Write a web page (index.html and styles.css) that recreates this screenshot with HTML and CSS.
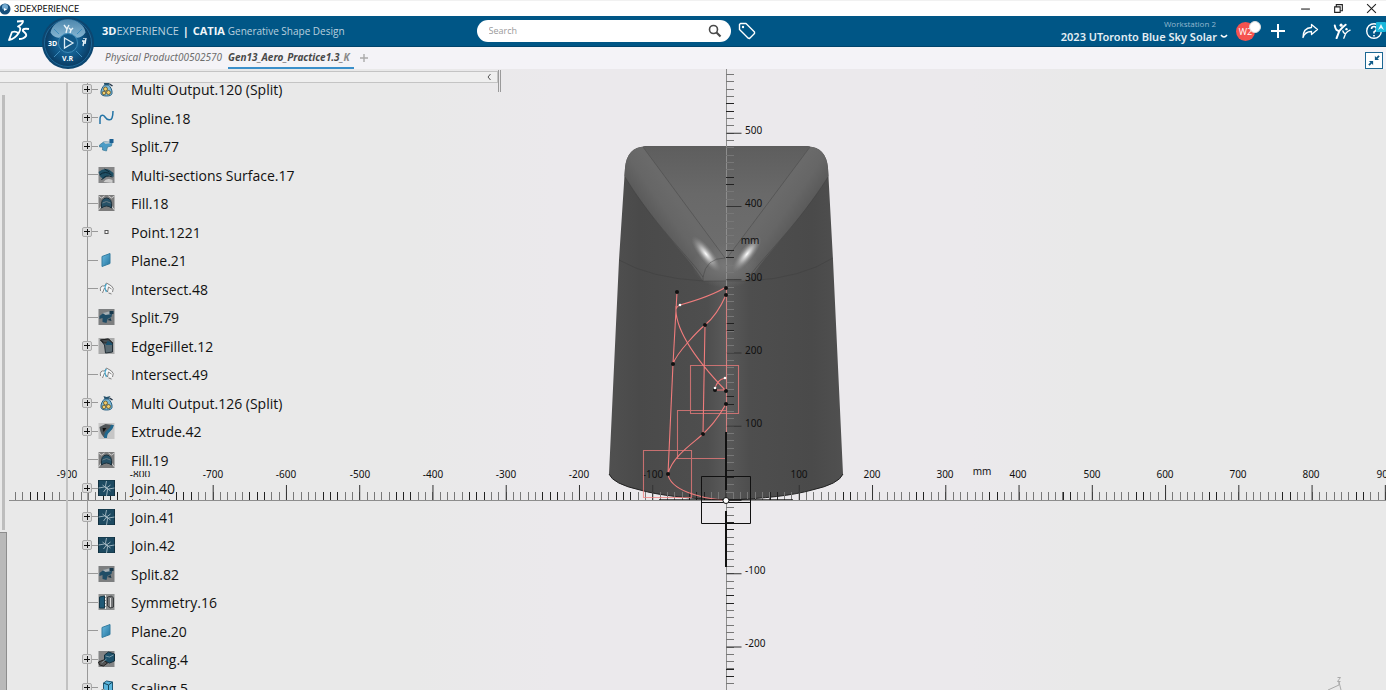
FILE: index.html
```html
<!DOCTYPE html>
<html lang="en">
<head>
<meta charset="utf-8">
<title>3DEXPERIENCE</title>
<link rel="stylesheet" href="styles.css">
</head>
<body>
<svg class="defs" aria-hidden="true">
  <defs>
    <linearGradient id="steel" x1="0" y1="0" x2="1" y2="1"><stop offset="0" stop-color="#6cbbe0"/><stop offset="1" stop-color="#22749f"/></linearGradient>
    <symbol id="i-bag" viewBox="0 0 16 16">
      <path d="M5 1l3 1 4-1-2 3H6z" fill="#27516a"/><path d="M11 3l3 2" stroke="#234" stroke-width="1.5"/>
      <path d="M6 4h4c2 2 4 5 3.500 8.500Q13 15 8 15t-5.500-2.500C2 9 4 6 6 4z" fill="#7db9d6" stroke="#255e80"/>
      <circle cx="7" cy="8" r="2" fill="#f2cd6a" stroke="#54441d" stroke-width=".7"/><circle cx="5.500" cy="12" r="1.800" fill="#f2cd6a" stroke="#54441d" stroke-width=".7"/><circle cx="10" cy="11.500" r="2" fill="#f2cd6a" stroke="#54441d" stroke-width=".7"/>
    </symbol>
    <symbol id="i-spline" viewBox="0 0 16 16"><path d="M1.500 14V9c0-4 3-5 5-2s6 4 7 1 1-4 1-7" fill="none" stroke="#2474a6" stroke-width="1.500"/></symbol>
    <symbol id="i-split" viewBox="0 0 16 16">
      <path d="M1 7l4-3 9-1-1 5-4 1-1 4-4-1V9L1 9z" fill="#4a9cc6" stroke="#31718f" stroke-width=".6"/><path d="M5 4l9-2v3L7 6z" fill="#b4c6cf"/><rect x="11" y="1" width="4" height="4" fill="#1b5f91"/>
    </symbol>
    <symbol id="i-split-dark" viewBox="0 0 16 16">
      <rect width="16" height="16" fill="#7d7f80"/><path d="M1 7l4-3 9-1-1 5-4 2-1 4-4-1V9L1 10z" fill="#204d66"/><path d="M4 4l9-2v3L7 6z" fill="#a9b1b5"/><path d="M11 2h4v3h-4zM9 11l3-2 1 3z" fill="#17384b"/>
    </symbol>
    <symbol id="i-sections" viewBox="0 0 16 16">
      <rect width="16" height="16" fill="#858687"/><path d="M0 5Q6 0 11 3l4 3v4Q10 6 5 12L2 10z" fill="#1f4f64"/><path d="M3 13q4-6 11-3M1 8q6-5 12 0M6 2l5 3" fill="none" stroke="#0c2835"/><path d="M5 15q3-5 9-2v3z" fill="#ccc"/>
    </symbol>
    <symbol id="i-fill" viewBox="0 0 16 16">
      <rect width="16" height="16" fill="#7c7c7c"/><path d="M0 1l3 2 3-2M16 1l-3 2-3-2M0 15l3-4M16 15l-3-4" stroke="#d2d2d2" fill="none"/><path d="M3 13Q2 3 8 3t5 10Q8 9 3 13z" fill="#265167" stroke="#1a303c"/><path d="M4 8q4-3 8 0" stroke="#6b7e87" fill="none"/>
    </symbol>
    <symbol id="i-point" viewBox="0 0 16 16"><rect x="6.500" y="6.500" width="3" height="3" fill="#fff" stroke="#555"/></symbol>
    <symbol id="i-plane" viewBox="0 0 16 16"><path d="M3.500 4.500l8-3v10l-8 3z" fill="url(#steel)" stroke="#357da0"/></symbol>
    <symbol id="i-intersect" viewBox="0 0 16 16"><path d="M2 10q-1-6 4-5l2-3 5 3q3 2 1 6M4 12l2-5 3 4 1-5 3 2M10 12l3 1" fill="#f7f7f7" stroke="#777" stroke-width=".9"/><path d="M8 3q-3 3 0 8" fill="none" stroke="#45a8cf" stroke-width="1.200"/></symbol>
    <symbol id="i-fillet" viewBox="0 0 16 16"><rect width="16" height="16" fill="#a9aaaa"/><path d="M2 2l8-1 4 4v9l-7 1-1-8z" fill="#5b6b73" stroke="#243038"/><path d="M2 2l8-1 4 4H6z" fill="#474d51" stroke="#222"/><path d="M9 3q5 1 5 4H7z" fill="#1c536f"/></symbol>
    <symbol id="i-extrude" viewBox="0 0 16 16"><rect width="16" height="16" fill="#c6c6c6"/><path d="M1 4l6-3 8 1q-1 4-4 6t-4 7q-5-2-6-11z" fill="#4f5558"/><path d="M14 2q-1 4-4 6t-3 7" fill="none" stroke="#22688d" stroke-width="3"/><path d="M4 5h4L5 9z" fill="#111"/></symbol>
    <symbol id="i-join" viewBox="0 0 16 16"><rect width="16" height="16" fill="#1d4a61"/><path d="M0 0h16v16H0z" fill="none" stroke="#12303f"/><path d="M8 1L7 6l2 4-1 6M0 8l6-1 4 2 6-1M4 5l4 3 4-3M5 12l3-4 4 3" fill="none" stroke="#a7bbc5" stroke-width=".9"/></symbol>
    <symbol id="i-symmetry" viewBox="0 0 16 16"><rect width="16" height="16" fill="#909292"/><path d="M1 3l5-1v12H1z" fill="#1f5976" stroke="#153747"/><path d="M7 1v14" stroke="#eee" stroke-dasharray="2 1"/><path d="M9 3l4-1 2 2v9l-3 1-3-2z" fill="#747678" stroke="#383b3d"/><path d="M12 4v9" stroke="#ddd"/></symbol>
    <symbol id="i-scale-dark" viewBox="0 0 16 16"><rect width="16" height="16" fill="#848586"/><path d="M6 4l4-3 6 2v7l-5 2-5-2z" fill="#1e526b" stroke="#14303e"/><path d="M0 11l5-2 4 3-4 3-4-1z" fill="#555" stroke="#222"/><path d="M7 5l4 1 4-2M3 12l5-4" stroke="#9eb4bf" fill="none" stroke-width=".7"/></symbol>
    <symbol id="i-scale" viewBox="0 0 16 16"><path d="M5 3l3-2 6 1v8l-4 2-5-2z" fill="#5bb5dc" stroke="#1e5673"/><path d="M5 3l5 2 4-3M10 5v7" stroke="#164559" fill="none"/><path d="M1 11l4-2 3 3-4 3z" fill="#f2f2e2" stroke="#888"/></symbol>
    <symbol id="i-people" viewBox="0 0 20 18"><circle cx="9" cy="2.500" r="1.700"/><path d="M2 3q1 6 5 6L4 17M14 2Q10 5 7 9" fill="none" stroke="currentColor" stroke-width="2.200" stroke-linecap="round"/><circle cx="15" cy="7" r="1.300"/><path d="M11 9q1 3 3 3l-2 5M19 8q-3 1-5 4" fill="none" stroke="currentColor" stroke-width="1.500" stroke-linecap="round"/></symbol>
  </defs>
</svg>

<div class="titlebar">
  <svg class="titlebar__logo" viewBox="0 0 12 12" aria-hidden="true"><circle cx="5" cy="6" r="5.500" fill="#164f7c"/><circle cx="5" cy="4" r="3" fill="#73a9cf"/><path d="M4 5l3 1.500L4 8z" fill="#fff"/></svg>
  <span class="titlebar__name">3DEXPERIENCE</span>
  <div class="titlebar__controls">
    <button aria-label="Minimize"><svg viewBox="0 0 10 10"><path d="M1 5.500h8"/></svg></button>
    <button aria-label="Restore"><svg viewBox="0 0 10 10"><path d="M1.500 3.500h5v5h-5zM3 3.500v-2h5.500V7H7"/></svg></button>
    <button aria-label="Close"><svg viewBox="0 0 10 10"><path d="M1 1l8 8M9 1L1 9"/></svg></button>
  </div>
</div>

<header class="header">
  <svg class="header__ds" viewBox="0 0 24 22" aria-hidden="true"><path d="M10 1.500l6-.5q0 3-5 5.500 4 1 1 6Q8 19 2 20l3-8q4-1 6 1" fill="none" stroke="#fff" stroke-width="1.800" stroke-linejoin="round"/><path d="M22 9q-7-1-6 2 4 3 3 5-2 3-7 3" fill="none" stroke="#fff" stroke-width="2"/></svg>
  <button class="compass" aria-label="Compass">
    <svg viewBox="0 0 54 54" aria-hidden="true">
      <defs>
        <radialGradient id="cg"><stop offset="0" stop-color="#2a7eb0"/><stop offset=".6" stop-color="#0f5788"/><stop offset="1" stop-color="#0a3c63"/></radialGradient>
        <linearGradient id="ct" x1="0" y1="0" x2="0" y2="1"><stop offset="0" stop-color="#4d87ad"/><stop offset="1" stop-color="#85b5d2"/></linearGradient>
      </defs>
      <circle cx="27" cy="27" r="26" fill="#0c4670"/><circle cx="27" cy="27" r="23.500" fill="url(#cg)" stroke="#1e6797"/>
      <path d="M27 3.500c9 0 17 6 17.500 13q-4 6-9.500 5-8-7-16 0-6 1-9.500-5C11 9 18 3.500 27 3.500z" fill="url(#ct)"/>
      <path d="M13 13l5 5M41 13l-5 5M13 41l6-6M41 41l-6-6" stroke="#3e8dbc"/>
      <circle cx="27" cy="27" r="9.500" fill="#125988" stroke="#3c8bb9"/><path d="M23.500 22l8.500 5-8.500 5z" fill="none" stroke="#dcecf5" stroke-width="1.300"/>
      <g stroke="#e9f3f8" stroke-width="1.400" fill="none"><path d="M23 9l3 4-1 4M28 9l-2 4M28 12l2 2-1 3M32 12l-2 2M41 25h2l-1 5M45 22l-1 6M43 22v1"/></g>
      <g class="compass__text"><text x="7" y="30">3D</text><text x="21" y="45">V.R</text></g>
    </svg>
  </button>
  <h1 class="brand"><b>3D</b>EXPERIENCE <span class="brand__bar">|</span> <strong>CATIA</strong> <span class="brand__app">Generative Shape Design</span></h1>
  <form class="search" role="search">
    <input class="search__input" type="search" aria-label="Search" placeholder="Search">
    <button class="search__go" type="button" aria-label="Run search"><svg viewBox="0 0 14 14"><circle cx="5.500" cy="5.500" r="4" fill="none" stroke="#4a4a4a" stroke-width="1.600"/><path d="M8.500 8.500l4 4" stroke="#4a4a4a" stroke-width="2.200"/></svg></button>
  </form>
  <button class="tagbtn" aria-label="Tags"><svg viewBox="0 0 18 18"><path d="M1.500 2.500l1-1h5.500l8.500 8.500v1.500L11.500 16.500l-1.500-.5L1.500 7.500z" fill="none" stroke="#fff" stroke-width="1.400" stroke-linejoin="round"/><circle cx="5" cy="5" r="1.200" fill="#fff"/></svg></button>
  <div class="account">
    <span class="account__station">Workstation 2</span>
    <button class="account__space">2023 UToronto Blue Sky Solar <svg viewBox="0 0 8 6"><path d="M1 2q1.500 2 3 2t3-2" fill="none" stroke="#fff" stroke-width="1.500"/></svg></button>
  </div>
  <nav class="actions" aria-label="User actions">
    <button class="avatar" aria-label="Profile">W2</button>
    <button aria-label="Add"><svg viewBox="0 0 18 18"><path d="M9 2v14M2 9h14" stroke="#fff" stroke-width="2"/></svg></button>
    <button aria-label="Share"><svg viewBox="0 0 18 18"><path d="M10.500 2.500l6 5-6 5v-3Q4 9.500 2 15.500 2 6 10.500 5.500z" fill="none" stroke="#fff" stroke-width="1.300" stroke-linejoin="round"/></svg></button>
    <button aria-label="Community"><svg viewBox="0 0 20 18" fill="#fff"><use href="#i-people"/></svg></button>
    <button class="help" aria-label="Help"><svg viewBox="0 0 18 18"><circle cx="9" cy="9" r="7.300" fill="none" stroke="#fff" stroke-width="1.400"/><path d="M6.500 7q0-2.500 2.500-2.500T11.500 7Q11.500 8.500 9 10v1.500M9 13v1.500" fill="none" stroke="#fff" stroke-width="1.600"/></svg><svg class="help__badge" viewBox="0 0 10 10"><rect width="10" height="10" rx="1" fill="#18b7dc"/><path d="M2 8l3-6 3 6-3-2z" fill="#e8fbff"/></svg></button>
  </nav>
</header>

<nav class="tabs" aria-label="Documents">
  <a class="tab" href="#product">Physical Product00502570</a>
  <a class="tab tab--on" href="#aero" aria-current="page">Gen13_Aero_Practice1.3_<span class="tab__fade">K</span></a>
  <button class="tabs__add" aria-label="New tab"><svg viewBox="0 0 8 8"><path d="M4 0v8M0 4h8" stroke="#aaa" stroke-width="1.400"/></svg></button>
  <button class="tabs__collapse" aria-label="Exit full screen"><svg viewBox="0 0 18 17"><path d="M10 3v5h5l-2-1.500L15.500 4 14 2.500 11.500 5zM8 14V9H3l2 1.500L2.500 13 4 14.500 6.500 12z" fill="#0e5a87"/></svg></button>
</nav>

<main class="workspace">
  <svg class="scene" viewBox="0 69 1386 621" preserveAspectRatio="xMidYMin slice" role="img" aria-label="Front view of the aero body with rulers">
    <defs>
      <linearGradient id="body" x1="609" x2="843" y1="0" y2="0" gradientUnits="userSpaceOnUse"><stop offset="0" stop-color="#505050"/><stop offset=".13" stop-color="#4a4a4a"/><stop offset=".42" stop-color="#4e4e4e"/><stop offset=".5" stop-color="#5a5a5a"/><stop offset=".6" stop-color="#4e4e4e"/><stop offset=".87" stop-color="#4a4a4a"/><stop offset="1" stop-color="#505050"/></linearGradient>
      <linearGradient id="roof" x1="0" y1="147" x2="0" y2="265" gradientUnits="userSpaceOnUse"><stop offset="0" stop-color="#5e5e5e"/><stop offset=".4" stop-color="#696969"/><stop offset="1" stop-color="#6f6f6f"/></linearGradient>
      <linearGradient id="bandL" x1="645" y1="240" x2="685" y2="212" gradientUnits="userSpaceOnUse"><stop offset="0" stop-color="#4c4c4c"/><stop offset=".7" stop-color="#666"/><stop offset="1" stop-color="#6a6a6a"/></linearGradient>
      <linearGradient id="bandR" x1="807" y1="240" x2="767" y2="212" gradientUnits="userSpaceOnUse"><stop offset="0" stop-color="#4c4c4c"/><stop offset=".7" stop-color="#666"/><stop offset="1" stop-color="#6a6a6a"/></linearGradient>
      <radialGradient id="nose"><stop offset="0" stop-color="#787878"/><stop offset="1" stop-color="#787878" stop-opacity="0"/></radialGradient>
      <radialGradient id="shine"><stop offset="0" stop-color="#fff"/><stop offset=".35" stop-color="#ccc" stop-opacity=".8"/><stop offset="1" stop-color="#888" stop-opacity="0"/></radialGradient>
      <clipPath id="hull"><path id="hullPath" d="M645 146.500H808Q826 147 828 168L833 260 843 474Q839 484 812 490 784 498 726 500 668 498 640 490 613 484 609 474L619 260 625 168Q627 147 645 146.500z"/></clipPath>
    </defs>
    <use href="#hullPath" fill="url(#body)"/>
    <g clip-path="url(#hull)">
      <path d="M643 146H810L726 264z" fill="url(#roof)"/>
      <path d="M600 146H643L724 258 Q704 260 703 281C690 258 655 226 625 177z" fill="url(#bandL)"/>
      <path d="M852 146H810L728 258Q748 260 749 281C762 258 797 226 828 177z" fill="url(#bandR)"/>
      <path d="M703 281Q703 258 726 258T749 281z" fill="#626262"/>
      <ellipse cx="726" cy="266" rx="34" ry="22" fill="url(#nose)"/>
      <ellipse cx="706" cy="254" rx="7" ry="22" fill="url(#shine)" transform="rotate(-38 706 254)"/>
      <ellipse cx="747" cy="254" rx="7" ry="22" fill="url(#shine)" transform="rotate(38 747 254)"/>
      <g fill="none" stroke="#3d3d3d" stroke-width=".8" opacity=".5"><path d="M643 147L725 258M810 147L727 258M625 177C655 226 690 258 703 277V281M828 177C797 226 762 258 749 277V281M619 260Q650 278 703 281H749Q802 278 833 258M703 277Q706 258 725 258"/></g>
      <path d="M643 146.500H810" stroke="#3c3c3c"/>
    </g>
    <path d="M609 474Q613 484 640 490 668 498 726 500 784 498 812 490 839 484 843 474" fill="none" stroke="#222"/>

    <g class="ruler">
      <path class="ruler__axis" d="M9 500.500H1386M726 69V690"/>
      <path class="ruler__minor" d="M725.500 496H1386" stroke-width="8" stroke-dasharray="1 6.326"/>
      <path class="ruler__minor" d="M726.500 496H12" stroke-width="8" stroke-dasharray="1 6.326"/>
      <path class="ruler__dark" d="M769.500 496H1386" stroke-width="8" stroke-dasharray="1 6.326 1 64.934"/>
      <path class="ruler__dark" d="M704.500 496H12" stroke-width="8" stroke-dasharray="1 6.326 1 6.326 1 57.608"/>
      <path class="ruler__major" d="M725.500 492.500H1386" stroke-width="15" stroke-dasharray="1 72.260"/>
      <path class="ruler__major" d="M726.500 492.500H60" stroke-width="15" stroke-dasharray="1 72.260"/>
      <path class="ruler__minor" d="M730 500V69M730 500V690" stroke-width="8" stroke-dasharray="1 6.326"/>
      <path class="ruler__dark" d="M730 478V69M730 522V690" stroke-width="8" stroke-dasharray="1 6.326 1 64.934"/>
      <path class="ruler__major" d="M734 500V69M734 500V690" stroke-width="15" stroke-dasharray="1 72.260"/>
    </g>
    <g class="ruler__labels">
      <g text-anchor="middle">
        <text x="67" y="478">-900</text><text x="140" y="478">-800</text><text x="213" y="478">-700</text><text x="286" y="478">-600</text><text x="360" y="478">-500</text><text x="433" y="478">-400</text><text x="506" y="478">-300</text><text x="579" y="478">-200</text><text x="653" y="478">-100</text>
        <text x="799" y="478">100</text><text x="872" y="478">200</text><text x="945" y="478">300</text><text x="1018" y="478">400</text><text x="1092" y="478">500</text><text x="1165" y="478">600</text><text x="1238" y="478">700</text><text x="1311" y="478">800</text><text x="1385" y="478">900</text>
        <text x="982" y="475">mm</text><text x="750" y="244">mm</text>
      </g>
      <text x="745" y="134">500</text><text x="745" y="207">400</text><text x="745" y="281">300</text><text x="745" y="354">200</text><text x="745" y="427">100</text><text x="745" y="574">-100</text><text x="745" y="647">-200</text>
    </g>

    <g class="sketch">
      <path d="M690.500 365.500h48v48h-48zM726 410.500h-48.500v48H726M643.500 450.500h48v47h-48z" opacity=".75"/>
      <path d="M677 292L673 364 668 474M676 309Q677 306 680 305 712 296 726 287M676 306C674 330 700 364 726 391M726 295C718 313 710 321 705 325S677 352 673 364M705 325L703 434M726 404C717 420 710 427 703 434S672 456 668 474C670 490 700 498 722 500M725 378Q716 380 715 390H726"/>
      <path d="M726.500 287V432" opacity=".7"/>
    </g>
    <g fill="#111"><circle cx="677" cy="292" r="2"/><circle cx="726" cy="288" r="2"/><circle cx="726" cy="295" r="2"/><circle cx="705" cy="325" r="2"/><circle cx="673" cy="364" r="2"/><circle cx="715" cy="390" r="2"/><circle cx="726" cy="391" r="2"/><circle cx="726" cy="404" r="2"/><circle cx="703" cy="434" r="2"/><circle cx="668" cy="474" r="2"/></g>
    <g fill="#fff"><circle cx="680" cy="305" r="1.300"/><circle cx="725" cy="378" r="1.300"/><circle cx="715" cy="388" r="1.300"/></g>
    <g fill="none" stroke="#111"><path d="M701.500 476.500h49v47h-49zM701.500 502.500h49"/><path d="M726 432V490M726 511V567" stroke-width="2"/><path d="M659 499.500H793" opacity=".7"/><circle cx="726" cy="500.500" r="3" fill="#fff"/></g>
    <g fill="none" stroke="#aaa"><path d="M1328 690l11-5v-3l2 8M1337.500 677.500h3l-3 4h3"/></g>
  </svg>

  <aside class="panel" aria-label="Specification tree">
    <div class="panel__bar"><button class="panel__fold" aria-label="Collapse tree"><svg viewBox="0 0 6 8"><path d="M4.500 1L2 4l2.500 3" fill="none" stroke="#555"/></svg></button></div>
    <div class="panel__body">
      <div class="gutter"><span class="gutter__track"></span><span class="gutter__thumb"></span></div>
      <ul class="tree">
        <li><button aria-label="Expand"></button><svg class="ico"><use href="#i-bag"/></svg><span>Multi Output.120 (Split)</span></li>
        <li><button aria-label="Expand"></button><svg class="ico"><use href="#i-spline"/></svg><span>Spline.18</span></li>
        <li><button aria-label="Expand"></button><svg class="ico"><use href="#i-split"/></svg><span>Split.77</span></li>
        <li><svg class="ico"><use href="#i-sections"/></svg><span>Multi-sections Surface.17</span></li>
        <li><svg class="ico"><use href="#i-fill"/></svg><span>Fill.18</span></li>
        <li><button aria-label="Expand"></button><svg class="ico"><use href="#i-point"/></svg><span>Point.1221</span></li>
        <li><svg class="ico"><use href="#i-plane"/></svg><span>Plane.21</span></li>
        <li><svg class="ico"><use href="#i-intersect"/></svg><span>Intersect.48</span></li>
        <li><svg class="ico"><use href="#i-split-dark"/></svg><span>Split.79</span></li>
        <li><button aria-label="Expand"></button><svg class="ico"><use href="#i-fillet"/></svg><span>EdgeFillet.12</span></li>
        <li><svg class="ico"><use href="#i-intersect"/></svg><span>Intersect.49</span></li>
        <li><button aria-label="Expand"></button><svg class="ico"><use href="#i-bag"/></svg><span>Multi Output.126 (Split)</span></li>
        <li><button aria-label="Expand"></button><svg class="ico"><use href="#i-extrude"/></svg><span>Extrude.42</span></li>
        <li><svg class="ico"><use href="#i-fill"/></svg><span>Fill.19</span></li>
        <li><button aria-label="Expand"></button><svg class="ico"><use href="#i-join"/></svg><span>Join.40</span></li>
        <li><button aria-label="Expand"></button><svg class="ico"><use href="#i-join"/></svg><span>Join.41</span></li>
        <li><button aria-label="Expand"></button><svg class="ico"><use href="#i-join"/></svg><span>Join.42</span></li>
        <li><svg class="ico"><use href="#i-split-dark"/></svg><span>Split.82</span></li>
        <li><svg class="ico"><use href="#i-symmetry"/></svg><span>Symmetry.16</span></li>
        <li><svg class="ico"><use href="#i-plane"/></svg><span>Plane.20</span></li>
        <li><button aria-label="Expand"></button><svg class="ico"><use href="#i-scale-dark"/></svg><span>Scaling.4</span></li>
        <li><button aria-label="Expand"></button><svg class="ico"><use href="#i-scale"/></svg><span>Scaling.5</span></li>
      </ul>
    </div>
  </aside>
  <div class="grip" aria-hidden="true"></div>
</main>
</body>
</html>
```
FILE: styles.css
```css
* { box-sizing: border-box; }
html, body { height: 100%; }
body {
  margin: 0;
  display: flex;
  flex-direction: column;
  overflow: hidden;
  background: #e9e9e9;
  color: #111;
  font-family: "Open Sans", "Noto Sans", sans-serif;
}
button { border: 0; padding: 0; background: none; color: inherit; font: inherit; display: flex; align-items: center; justify-content: center; }
.defs { position: absolute; width: 0; height: 0; }

/* Window title */
.titlebar { flex: none; height: 16px; display: flex; align-items: center; gap: 2px; background: #fff; border-top: 1px solid #f1f1f1; font: 9px/14px Lato, sans-serif; }
.titlebar__logo { width: 12px; height: 12px; }
.titlebar__controls { margin-left: auto; display: flex; gap: 22px; padding-right: 9px; }
.titlebar__controls svg { width: 11px; height: 11px; fill: none; stroke: #222; }

/* Top bar */
.header { position: relative; flex: none; height: 31px; display: flex; align-items: center; background: #005686; border-bottom: 1px solid #00446c; color: #fff; }
.header__ds { flex: none; width: 24px; height: 22px; margin-left: 7px; }
.compass { position: absolute; z-index: 2; left: 41px; top: 0; width: 54px; height: 54px; }
.compass svg { width: 54px; height: 54px; }
.compass__text { fill: #fff; font-size: 7px; font-weight: 700; }
.brand { flex: 375 1 0; margin: 0 0 0 71px; font-size: 11px; font-weight: 400; line-height: 16px; color: #b9d0df; white-space: nowrap; }
.brand b, .brand strong, .brand__bar { color: #f2f7fa; font-weight: 700; }
.brand__bar { margin: 0 1px; }
.brand__app { font-size: 10px; }
.search { flex: none; width: 254px; height: 22px; display: flex; align-items: center; padding: 0 9px 0 12px; border-radius: 11px; background: #fff; }
.search__input { flex: 1; min-width: 0; border: 0; padding: 0; outline: 0; background: none; font: 9px/16px "Open Sans", sans-serif; }
.search__input::placeholder { color: #9a9a9a; }
.search__go svg { width: 14px; height: 14px; }
.tagbtn { margin-left: 7px; }
.tagbtn svg { width: 18px; height: 18px; }
.account { flex: 473 1 0; display: flex; flex-direction: column; align-items: flex-end; white-space: nowrap; }
.account__station { padding-right: 12px; font-size: 8px; line-height: 10px; color: #94b8cf; }
.account__space { gap: 3px; font: 600 11px/15px "Noto Sans", sans-serif; color: #e4eef4; }
.account__space svg { width: 8px; height: 6px; }
.actions { display: flex; align-items: center; gap: 14px; margin: 0 3px 0 8px; }
.actions svg { width: 18px; height: 18px; color: #fff; }
.avatar { position: relative; width: 19px; height: 19px; border-radius: 50%; background: #f5534f; font-size: 9px; }
.avatar::after { content: ""; position: absolute; right: -6px; top: -1px; width: 10px; height: 10px; border-radius: 50%; background: #fff; border: 1px solid #ddd; }
.help { position: relative; }
.actions .help__badge { position: absolute; right: -3px; top: 0; width: 10px; height: 10px; }

/* Document tabs */
.tabs { flex: none; height: 22px; display: flex; align-items: stretch; gap: 6px; padding: 0 3px 0 105px; background: #f4f3f7; font: italic 10px/21px "Noto Sans", sans-serif; }
.tab { color: #6d6d6d; text-decoration: none; white-space: nowrap; }
.tab--on { height: 22px; padding-right: 4px; border-bottom: 2px solid #3a8fca; color: #484848; font-weight: 700; }
.tab__fade { color: #8a8a8a; }
.tabs__add svg { width: 8px; height: 8px; }
.tabs__collapse { align-self: flex-end; margin-left: auto; width: 18px; height: 17px; border: 1px solid #1b6793; background: #fff; }
.tabs__collapse svg { width: 16px; height: 15px; }

/* Drawing area and tree */
.workspace { position: relative; flex: 1; min-height: 0; display: flex; align-items: stretch; overflow: hidden; }
.scene { position: absolute; inset: 0; width: 100%; height: 100%; background: linear-gradient(90deg, #e9e9e9 30%, #ebe9ec 40%, #ebe9ec 70%, #e9e9e9 78%); }
.ruler path { fill: none; }
.ruler__axis, .ruler__minor, .ruler__dark { shape-rendering: crispEdges; }
.ruler__axis { stroke: #8d8d8d; }
.ruler__minor { stroke: #777; }
.ruler__dark { stroke: #222; }
.ruler__major { stroke: #333; }
.ruler__labels { font: 10px "Noto Sans", sans-serif; fill: #111; }
.sketch { fill: none; stroke: #f07c7c; stroke-width: 1.1; }
.panel { position: relative; flex: none; width: 498px; display: flex; flex-direction: column; }
.panel__bar { flex: none; height: 12px; margin-top: 2px; display: flex; justify-content: flex-end; align-items: center; border: solid #c4c4c4; border-width: 1px 1px 1px 0; background: #efefef; padding-right: 5px; }
.panel__fold svg { width: 6px; height: 8px; }
.panel__body { flex: 1; min-height: 0; display: flex; overflow: hidden; }
.gutter { flex: none; width: 68px; padding-top: 12px; display: flex; flex-direction: column; border-right: 2px solid #c2c2c2; }
.gutter__track { flex: 436 0 0; width: 3px; margin: 0 0 2px 2px; background: #bdbdbd; }
.gutter__thumb { flex: 158 0 0; width: 7px; background: #b9b9b9; border: solid #8d8d8d; border-width: 1px 1px 0 0; }
.tree { flex: 1; margin: -8px 0 0; padding: 0 0 0 14px; list-style: none; background: linear-gradient(#999, #999) 19px 0 / 1px 100% no-repeat; }
.tree li { display: flex; align-items: center; height: 28px; padding-left: 16px; background: linear-gradient(#999, #999) 5px 14px / 11px 1px no-repeat; font-size: 14px; line-height: 20px; }
.tree li:nth-child(2n) { height: 29px; }
.tree button { width: 10px; height: 10px; margin-left: -16px; margin-right: 6px; border: 1px solid #aaa; border-radius: 2px; background: linear-gradient(#111, #111) center / 6px 1px no-repeat, linear-gradient(#111, #111) center / 1px 6px no-repeat, #ddd; }
.ico { flex: none; width: 17px; height: 16px; }
.tree span { margin-left: 16px; padding-top: 2px; background: #e9e9e9; white-space: nowrap; }
.grip { position: relative; width: 3px; height: 22px; margin-top: 1px; border: solid #9a9a9a; border-width: 0 1px; }
```
